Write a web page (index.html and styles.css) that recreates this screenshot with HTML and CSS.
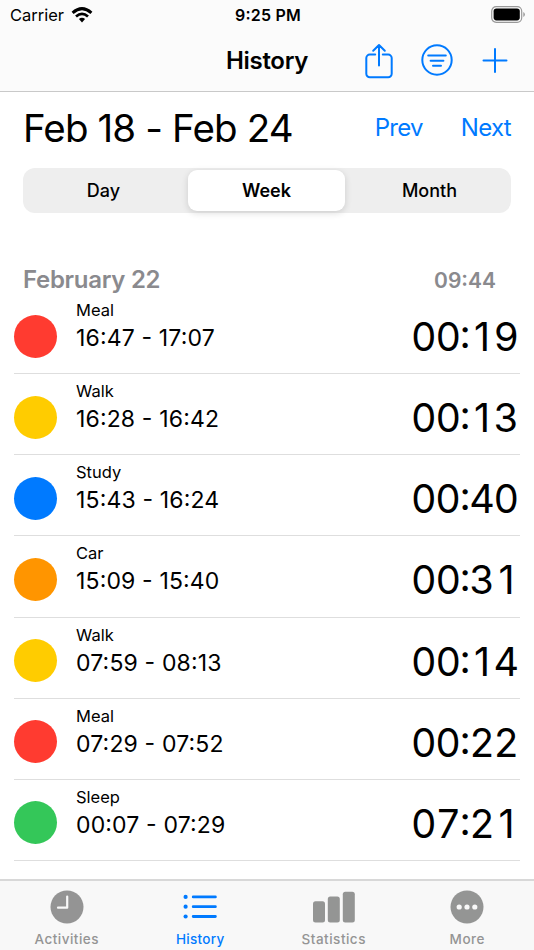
FILE: index.html
```
<!DOCTYPE html>
<html lang="en">
<head>
  <meta charset="UTF-8">
  <title>History</title>
  <link rel="stylesheet" href="styles.css">
</head>
<body>
  <header class="top">
    <div class="status">
      <div class="carrier">
        <span>Carrier</span>
        <svg width="22" height="16" viewBox="0 0 22 16">
          <path d="M1.6 5.8Q11 -2.5 20.4 5.8" fill="none" stroke="#000" stroke-width="3"/>
          <path d="M5 9.5Q11 4.3 17 9.5" fill="none" stroke="#000" stroke-width="2.8"/>
          <path d="M7.9 12.1Q11 9.4 14.1 12.1L11 15.5Z"/>
        </svg>
      </div>
      <div class="clock">9:25 PM</div>
      <svg class="battery" width="35" height="18" viewBox="0 0 35 18">
        <rect x=".7" y=".7" width="30" height="15.6" rx="4.5" fill="none" stroke="#999" stroke-width="1.2"/>
        <rect x="2.6" y="2.6" width="26.2" height="11.8" rx="2.8"/>
        <path d="M32.3 6v5q1.6-.6 1.6-2.5T32.3 6Z" fill="#999"/>
      </svg>
    </div>
    <div class="navbar">
      <h1>History</h1>
      <div class="actions">
        <svg width="28" height="36" viewBox="0 0 28 36">
          <path d="M10.2 11.6H4.8a3.5 3.5 0 0 0-3.5 3.5v15.7a3.5 3.5 0 0 0 3.5 3.5h18.4a3.5 3.5 0 0 0 3.5-3.5V15.1a3.5 3.5 0 0 0-3.5-3.5h-5.4M14 22.5V2M8.2 7.8 14 2l5.8 5.8"/>
        </svg>
        <svg width="32" height="32" viewBox="0 0 32 32">
          <circle cx="16" cy="16" r="14.7"/>
          <path d="M7.2 11.5h17.6M9.6 16.7h12.8M12 21.8h8"/>
        </svg>
        <svg width="26" height="26" viewBox="0 0 26 26">
          <path d="M1.5 13.5h23M13 2v23"/>
        </svg>
      </div>
    </div>
  </header>

  <main>
    <div class="range">
      <h2>Feb 18 - Feb 24</h2>
      <div class="pager">
        <a>Prev</a>
        <a>Next</a>
      </div>
    </div>

    <div class="segments">
      <div class="segment">Day</div>
      <div class="segment selected">Week</div>
      <div class="segment">Month</div>
    </div>

    <div class="day">
      <span class="day-name">February 22</span>
      <span class="day-total">09:44</span>
    </div>

    <ul class="entries">
      <li class="entry">
        <span class="dot red"></span>
        <div class="info"><div class="name">Meal</div><div class="time">16:47 - 17:07</div></div>
        <div class="duration">00:<span class="one">1</span>9</div>
      </li>
      <li class="entry">
        <span class="dot yellow"></span>
        <div class="info"><div class="name">Walk</div><div class="time">16:28 - 16:42</div></div>
        <div class="duration">00:<span class="one">1</span>3</div>
      </li>
      <li class="entry">
        <span class="dot blue"></span>
        <div class="info"><div class="name">Study</div><div class="time">15:43 - 16:24</div></div>
        <div class="duration">00:40</div>
      </li>
      <li class="entry">
        <span class="dot orange"></span>
        <div class="info"><div class="name">Car</div><div class="time">15:09 - 15:40</div></div>
        <div class="duration">00:3<span class="one">1</span></div>
      </li>
      <li class="entry">
        <span class="dot yellow"></span>
        <div class="info"><div class="name">Walk</div><div class="time">07:59 - 08:13</div></div>
        <div class="duration">00:<span class="one">1</span>4</div>
      </li>
      <li class="entry">
        <span class="dot red"></span>
        <div class="info"><div class="name">Meal</div><div class="time">07:29 - 07:52</div></div>
        <div class="duration">00:22</div>
      </li>
      <li class="entry">
        <span class="dot green"></span>
        <div class="info"><div class="name">Sleep</div><div class="time">00:07 - 07:29</div></div>
        <div class="duration">07:2<span class="one">1</span></div>
      </li>
    </ul>
  </main>

  <nav class="tabs">
    <div class="tab">
      <svg width="34" height="34" viewBox="0 0 34 34">
        <circle cx="17" cy="17" r="16.5" fill="#949494"/>
        <path d="M17.2 6.5v11.2H8" fill="none" stroke="#f8f8f8" stroke-width="2.2" stroke-linecap="round" stroke-linejoin="round"/>
      </svg>
      <span>Activities</span>
    </div>
    <div class="tab active">
      <svg width="34" height="34" viewBox="0 0 34 34">
        <g fill="#007aff"><circle cx="2.6" cy="6.9" r="2.1"/><circle cx="2.6" cy="16.7" r="2.1"/><circle cx="2.6" cy="26.5" r="2.1"/></g>
        <path d="M10.2 6.9h22.2M10.2 16.7h22.2M10.2 26.5h22.2" stroke="#007aff" stroke-width="2.8" stroke-linecap="round"/>
      </svg>
      <span>History</span>
    </div>
    <div class="tab">
      <svg width="42" height="34" viewBox="0 0 42 34">
        <g fill="#949594"><rect x="0" y="11.3" width="12" height="21.2" rx="2.5"/><rect x="14.8" y="6.5" width="12" height="26" rx="2.5"/><rect x="29.8" y="1.7" width="12" height="30.8" rx="2.5"/></g>
      </svg>
      <span>Statistics</span>
    </div>
    <div class="tab">
      <svg width="34" height="34" viewBox="0 0 34 34">
        <circle cx="17" cy="17" r="16.5" fill="#949594"/>
        <g fill="#f8f8f8"><circle cx="9.2" cy="17" r="2.6"/><circle cx="17" cy="17" r="2.6"/><circle cx="24.8" cy="17" r="2.6"/></g>
      </svg>
      <span>More</span>
    </div>
  </nav>
</body>
</html>
```

FILE: styles.css
```
* {
  box-sizing: border-box;
}
body {
  margin: 0;
  height: 950px;
  display: flex;
  flex-direction: column;
  overflow: hidden;
  background: #fff;
  color: #000;
  font-family: Inter, "Liberation Sans", sans-serif;
}
h1, h2, ul {
  margin: 0;
  padding: 0;
  font-weight: 400;
}
.top {
  height: 92px;
  flex: none;
  background: #fbfbfb;
  border-bottom: 1px solid #c9c9c9;
}
.status {
  height: 30px;
  display: grid;
  grid-template-columns: 1fr auto 1fr;
  align-items: center;
  padding: 0 8px 0 10px;
  font-size: 16.5px;
}
.carrier {
  display: flex;
  align-items: center;
  gap: 7px;
}
.clock {
  font-weight: 600;
  font-size: 16px;
  letter-spacing: .2px;
  font-feature-settings: "case";
}
.battery {
  justify-self: end;
  margin-top: -1px;
}
.navbar {
  height: 60px;
  display: grid;
  grid-template-columns: 1fr auto 1fr;
  align-items: center;
  padding: 0 26px;
}
.navbar h1 {
  grid-column: 2;
  font-size: 24px;
  font-weight: 600;
  letter-spacing: -.3px;
}
.actions {
  display: flex;
  align-items: center;
  justify-content: flex-end;
  gap: 29px;
}
.actions svg {
  fill: none;
  stroke: #007aff;
  stroke-width: 2;
  stroke-linecap: round;
  stroke-linejoin: round;
}
.actions svg:first-child {
  margin-top: 2px;
  margin-right: -1px;
}
main {
  flex: 1;
}
.range {
  height: 76px;
  display: flex;
  align-items: center;
  justify-content: space-between;
  padding: 0 23px 5px;
}
.range h2 {
  font-size: 38.5px;
  letter-spacing: -.87px;
  white-space: nowrap;
}
.pager {
  display: flex;
  gap: 38px;
  font-size: 24px;
  letter-spacing: -.7px;
  color: #007aff;
}
.segments {
  height: 45px;
  margin: 0 23px;
  padding: 2px;
  display: grid;
  grid-template-columns: 163px 157px 1fr;
  border-radius: 12px;
  background: #eee;
  font-size: 18px;
  font-weight: 500;
}
.segment {
  display: flex;
  align-items: center;
  justify-content: center;
}
.segment:first-child {
  padding-right: 6px;
}
.segment:last-child {
  padding-left: 5px;
}
.selected {
  border-radius: 9px;
  background: #fff;
  box-shadow: 0 2px 7px rgba(0, 0, 0, .14);
  font-weight: 600;
}
.day {
  height: 80px;
  display: flex;
  align-items: flex-end;
  justify-content: space-between;
  padding: 0 38px 0 23px;
  color: #8a8a8e;
  font-weight: 600;
}
.day-name {
  font-size: 24px;
  line-height: 26px;
  letter-spacing: -.3px;
}
.day-total {
  font-size: 21px;
  line-height: 24px;
}
.entries {
  list-style: none;
  margin: 0 14px;
}
.entry {
  height: 81.17px;
  display: grid;
  grid-template-columns: 43px 1fr auto;
  column-gap: 19px;
  border-bottom: 1px solid #dedede;
}
.dot {
  width: 43px;
  height: 43px;
  margin-top: 21.5px;
  border-radius: 50%;
}
.red { background: #ff3b30; }
.yellow { background: #ffcc00; }
.blue { background: #007aff; }
.orange { background: #ff9500; }
.green { background: #34c759; }
.name {
  margin-top: 7px;
  font-size: 16.5px;
  line-height: 20px;
}
.time {
  margin-top: 4px;
  font-size: 23px;
  line-height: 28px;
  letter-spacing: .15px;
  font-feature-settings: "case";
}
.duration {
  font-size: 39.5px;
  line-height: 48px;
  margin-top: 20px;
  padding-right: 2px;
  letter-spacing: -1.2px;
  font-feature-settings: "case", "tnum";
}
/* plain 1 without the foot, kept as wide as the other digits */
.one {
  display: inline-block;
  width: 24.3px;
  text-align: center;
  font-feature-settings: "tnum" 0;
}
.tabs {
  height: 71px;
  flex: none;
  display: grid;
  grid-template-columns: repeat(4, 1fr);
  background: #f8f8f8;
  border-top: 2px solid #d8d8d8;
  color: #949494;
  font-size: 13.5px;
  font-weight: 500;
  letter-spacing: .5px;
}
.tab {
  display: flex;
  flex-direction: column;
  align-items: center;
  padding-top: 9px;
}
.tab span {
  margin-top: 6px;
  line-height: 18px;
}
.active {
  color: #007aff;
}
.tab.active span {
  letter-spacing: .3px;
}
```
